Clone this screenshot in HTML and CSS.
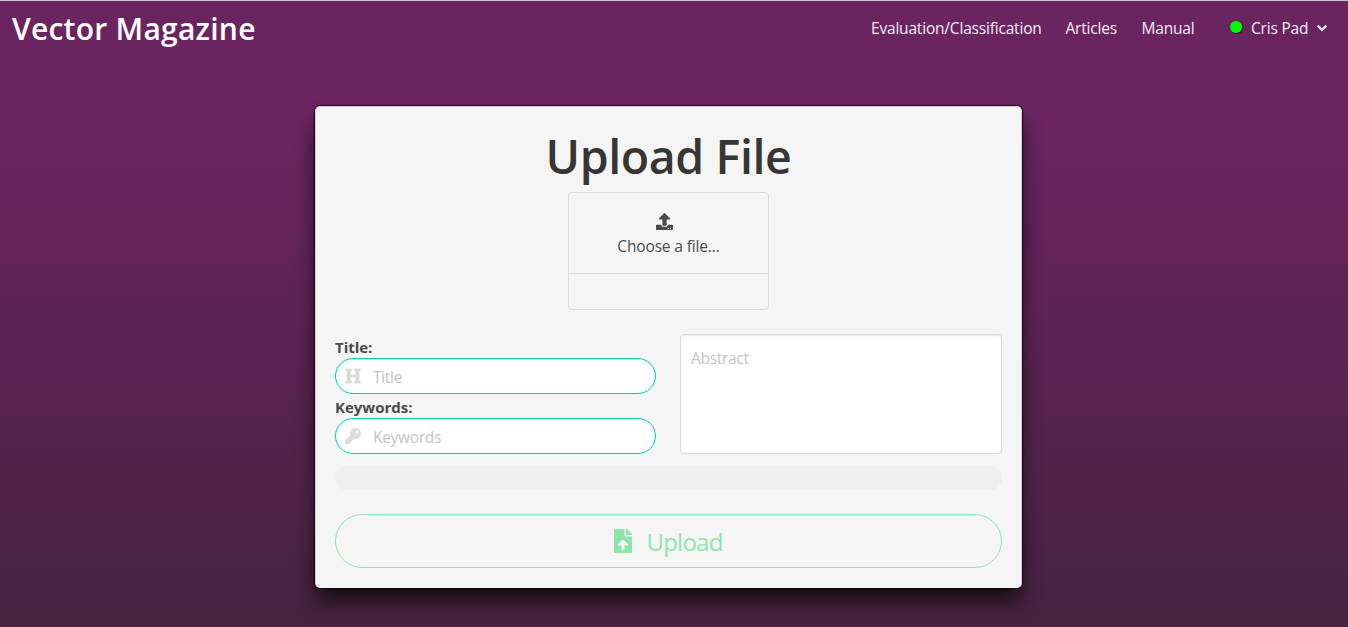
FILE: index.html
```html
<!DOCTYPE html>
<html lang="en">
<head>
<meta charset="utf-8">
<title>Vector Magazine</title>
<link rel="stylesheet" href="styles.css">
</head>
<body>
<header class="navbar">
  <a class="brand">Vector Magazine</a>
  <nav class="menu">
    <a class="nav-eval">Evaluation/Classification</a>
    <a class="nav-articles">Articles</a>
    <a class="nav-manual">Manual</a>
    <a class="user"><span class="status"></span><span class="user-name">Cris Pad</span>
      <svg class="chevron" viewBox="0 0 12 8"><path d="M1.6 1.6 6 5.8 10.4 1.6" fill="none" stroke="currentColor" stroke-width="2.3"/></svg>
    </a>
  </nav>
</header>
<main class="card">
  <h1 class="title">Upload File</h1>
  <label class="file">
    <span class="file-cta">
      <svg class="file-icon" viewBox="0 0 512 512"><path fill="currentColor" d="M296 384h-80c-13.300 0-24-10.700-24-24V192h-87.700c-17.800 0-26.700-21.500-14.100-34.100L242.300 5.700c7.500-7.500 19.800-7.500 27.300 0l152.200 152.200c12.600 12.600 3.700 34.100-14.100 34.100H320v168c0 13.300-10.700 24-24 24zm216-8v112c0 13.300-10.700 24-24 24H24c-13.300 0-24-10.700-24-24V376c0-13.300 10.700-24 24-24h136v8c0 30.900 25.100 56 56 56h80c30.900 0 56-25.100 56-56v-8h136c13.300 0 24 10.700 24 24zm-124 88c0-11-9-20-20-20s-20 9-20 20 9 20 20 20 20-9 20-20zm64 0c0-11-9-20-20-20s-20 9-20 20 9 20 20 20 20-9 20-20z"/></svg>
      <span class="file-label">Choose a file…</span>
    </span>
    <span class="file-name"></span>
  </label>
  <div class="columns">
    <div class="fields">
      <label class="label label-title" for="title">Title:</label>
      <div class="control">
        <svg class="icon" viewBox="0 0 512 512"><path fill="currentColor" stroke="currentColor" stroke-width="22" d="M448 96v320h32a16 16 0 0 1 16 16v32a16 16 0 0 1-16 16H320a16 16 0 0 1-16-16v-32a16 16 0 0 1 16-16h32V288H160v128h32a16 16 0 0 1 16 16v32a16 16 0 0 1-16 16H32a16 16 0 0 1-16-16v-32a16 16 0 0 1 16-16h32V96H32a16 16 0 0 1-16-16V48a16 16 0 0 1 16-16h160a16 16 0 0 1 16 16v32a16 16 0 0 1-16 16h-32v128h192V96h-32a16 16 0 0 1-16-16V48a16 16 0 0 1 16-16h160a16 16 0 0 1 16 16v32a16 16 0 0 1-16 16z"/></svg>
        <input class="input" id="title" placeholder="Title">
      </div>
      <label class="label label-keys" for="keywords">Keywords:</label>
      <div class="control">
        <svg class="icon" viewBox="0 0 512 512"><path fill="currentColor" d="M512 176C512 273.200 433.200 352 336 352c-11.220 0-22.190-1.060-32.830-3.070l-24.010 27.010A24 24 0 0 1 261.220 384H224v40c0 13.250-10.750 24-24 24h-40v40c0 13.250-10.750 24-24 24H24c-13.250 0-24-10.750-24-24v-78.060c0-6.360 2.530-12.470 7.030-16.970l161.800-161.800C163.110 213.810 160 195.270 160 176 160 78.800 238.800 0 336 0 433.490 0 512 78.510 512 176zM336 128c0 26.510 21.490 48 48 48s48-21.490 48-48-21.490-48-48-48-48 21.490-48 48z"/></svg>
        <input class="input" id="keywords" placeholder="Keywords">
      </div>
    </div>
    <textarea class="textarea" placeholder="Abstract"></textarea>
  </div>
  <div class="progress"></div>
  <button class="upload">
    <svg class="upload-icon" viewBox="0 0 384 512"><path fill="currentColor" d="M224 136V0H24C10.700 0 0 10.700 0 24v464c0 13.300 10.700 24 24 24h336c13.300 0 24-10.700 24-24V160H248c-13.200 0-24-10.800-24-24zm65.180 216.010H224v80c0 8.840-7.160 16-16 16h-32c-8.840 0-16-7.160-16-16v-80H94.820c-14.280 0-21.410-17.290-11.270-27.360l96.420-95.700c6.650-6.610 17.390-6.610 24.040 0l96.420 95.700c10.150 10.070 3.030 27.360-11.250 27.360zM377 105L279.100 7c-4.500-4.500-10.600-7-17-7H256v128h128v-6.100c0-6.300-2.500-12.400-7-16.900z"/></svg>
    <span class="upload-label">Upload</span>
  </button>
</main>
</body>
</html>
```
FILE: styles.css
```css
* { box-sizing: border-box; }
body {
  margin: 0;
  height: 627px;
  overflow: hidden;
  border-top: 1px solid #c9c4c9;
  background: linear-gradient(#6a2560 0, #6a2560 110px, #602357 280px, #44233e 627px);
  font: 16px/24px "Open Sans", "Noto Sans", sans-serif;
  color: #4a4a4a;
}
.navbar {
  display: flex;
  justify-content: space-between;
  height: 56px;
  padding: 0 20px 0 12px;
  color: #fff;
}
.brand { font-size: 30px; font-weight: 600; line-height: 55px; letter-spacing: .25px; white-space: nowrap; }
.menu { display: flex; line-height: 54px; font-size: 15.5px; letter-spacing: -.19px; color: #f5eef4; white-space: nowrap; }
.nav-eval { width: 194.5px; }
.nav-articles { width: 76px; }
.nav-manual { width: 88.5px; }
.user { display: flex; align-items: center; height: 54px; }
.status { width: 12px; height: 12px; border-radius: 50%; background: #0f0; margin: -3px 9px 0 0; box-shadow: 1px 1px 1px #3a1535; }
.user-name { width: 65px; }
.chevron { width: 12px; height: 8px; }
.card {
  width: 707px;
  height: 482px;
  margin: 49px 0 0 315px;
  padding: 20px 19px;
  border: 1px solid #d5cdd4;
  border-width: 1px 1px 0;
  border-radius: 5px;
  background: #f5f5f5;
  box-shadow: 0 0 1px 1px #1b0b18, 0 14px 20px -2px #120b11;
}
.title { margin: 0; height: 65px; font-size: 46.5px; line-height: 58px; font-weight: 600; text-align: center; color: #363636; letter-spacing: -.4px; }
.file { display: block; width: 201px; height: 118px; margin: 0 auto; border: 1px solid #dbdbdb; border-radius: 4px; }
.file-cta { display: flex; flex-direction: column; align-items: center; height: 81px; padding-top: 20px; border-bottom: 1px solid #dbdbdb; }
.file-icon { width: 17px; height: 17px; margin-right: 8px; }
.file-label { margin-top: 4px; font-size: 15.5px; letter-spacing: -.15px; }
.columns { display: grid; grid-template-columns: 321px 322px; column-gap: 24px; margin-top: 24px; height: 120px; }
.label { display: block; height: 24px; font-size: 15px; font-weight: 700; line-height: 26px; letter-spacing: -.05px; }
.label-keys { letter-spacing: 0; }
.control { position: relative; height: 36px; }
.icon { position: absolute; left: 10px; top: 10px; width: 16px; height: 16px; color: #dbdbdb; }
.input, .textarea {
  display: block;
  width: 100%;
  margin: 0;
  background: #fff;
  font: inherit;
  font-size: 15.5px;
  letter-spacing: -.3px;
  outline: 0;
  box-shadow: inset 0 1px 2px rgba(10, 10, 10, .1);
}
.input { height: 36px; padding: 2px 12px 0 37px; border: 1px solid #00d1b2; border-radius: 18px; }
.textarea { height: 120px; padding: 11px 10px; border: 1px solid #dbdbdb; border-radius: 4px; resize: none; }
::placeholder { color: #c3c3c3; opacity: 1; }
.progress { height: 24px; margin-top: 12px; border-radius: 12px; background: #efefef; }
.upload {
  display: flex;
  justify-content: center;
  align-items: center;
  width: 100%;
  height: 54px;
  margin: 24px 0 0;
  padding: 0;
  border: 1px solid #8ee4ad;
  border-radius: 27px;
  background: transparent;
  color: #8ee4ad;
  font: inherit;
}
.upload-icon { width: 18px; height: 24px; margin: 0 14px 0 0; }
.upload-label { font-size: 24px; line-height: 30px; letter-spacing: -.75px; padding-top: 2px; }
```
